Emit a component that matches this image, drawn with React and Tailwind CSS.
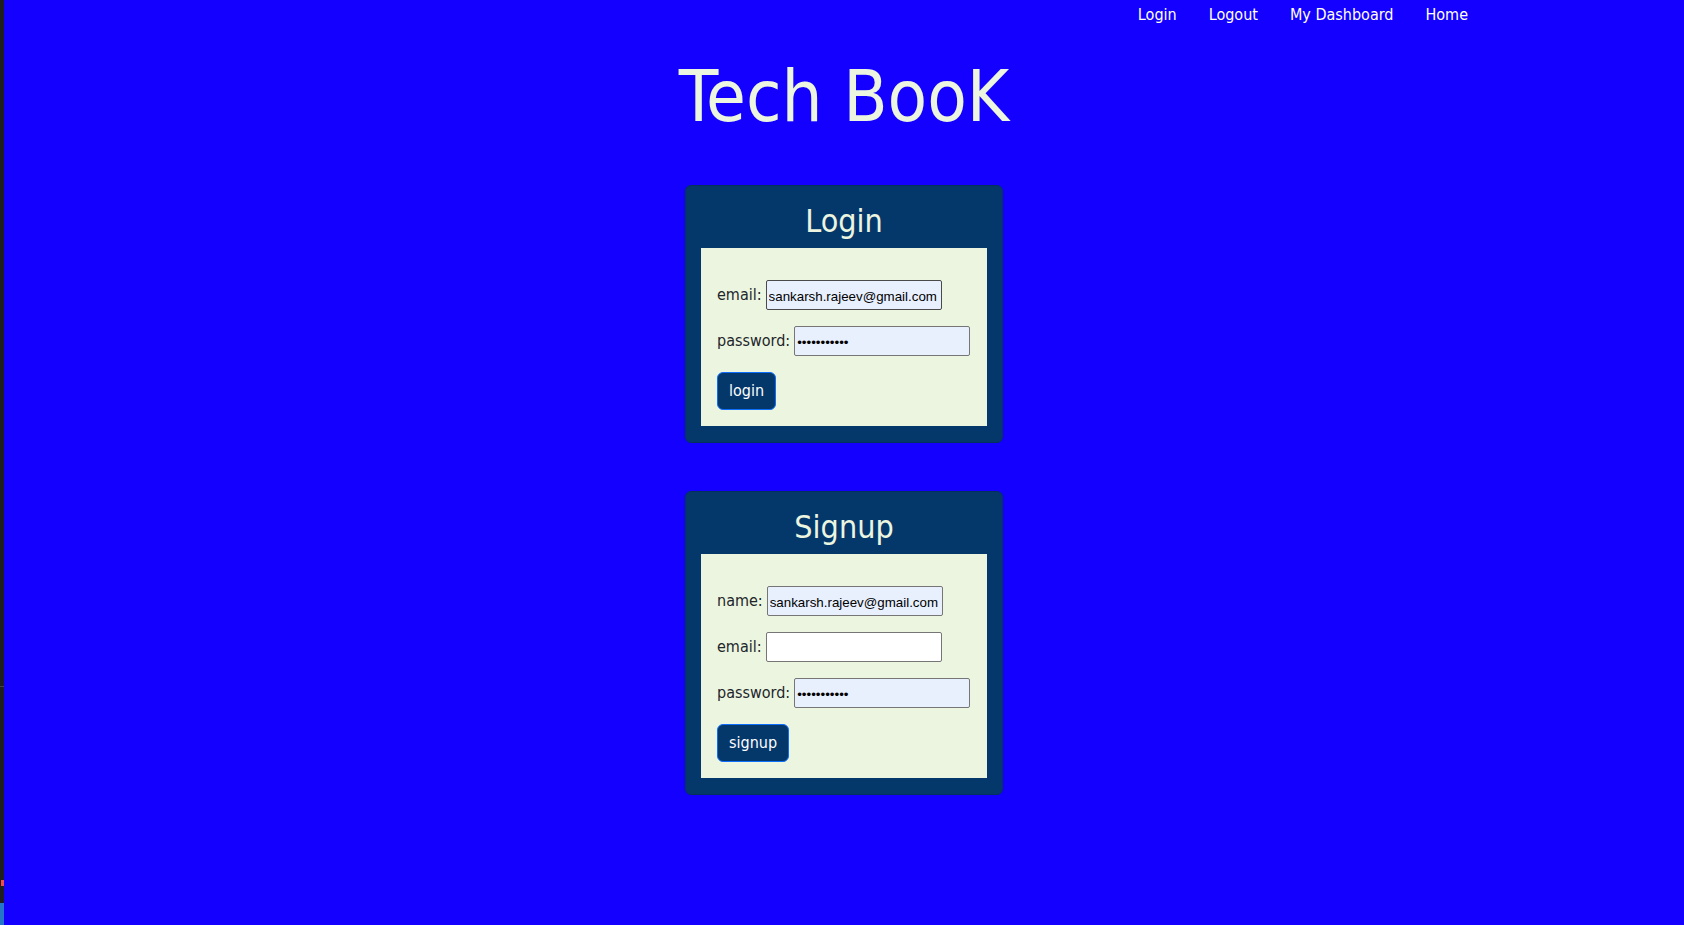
const links = ["Login", "Logout", "My Dashboard", "Home"];

function Field({ id, label, type, value = "", dark = false }) {
  return (
    <div className="flex items-center gap-1">
      <label htmlFor={id}>{label}:</label>
      <input
        id={id}
        type={type}
        defaultValue={value}
        className={`h-[30px] w-44 rounded-xs border px-0.5 pt-0.5 font-['Liberation_Sans',Arial,sans-serif] [font-size:smaller] text-black ${
          dark ? "border-[#4a4a4a]" : "border-[#767676]"
        } ${value ? "bg-[#e8f0fe]" : "bg-white"}`}
      />
    </div>
  );
}

function Card({ title, action, children }) {
  return (
    <section className="w-[318px] rounded-md border border-[#04305d] bg-[#04386b] px-[15px] py-4">
      <h2 className="mb-2 text-center text-[32px] leading-[38px] text-[#ecf5e0]">{title}</h2>
      <form
        className="flex flex-col items-start gap-4 bg-[#ecf5e0] px-4 pt-8 pb-4"
        onSubmit={(e) => e.preventDefault()}
      >
        {children}
        <button
          type="submit"
          className="h-[38px] rounded-md border border-[#0d6efd] bg-[#04386b] px-[11px] text-white"
        >
          {action}
        </button>
      </form>
    </section>
  );
}

export default function App() {
  return (
    <div className="flex min-h-screen bg-[#1400ff] font-['DejaVu_Sans_Condensed','DejaVu_Sans',sans-serif] text-[16px] leading-6 text-[#212529]">
      <div className="flex w-1 shrink-0 flex-col items-end bg-[#1e1e1e]">
        <div className="mt-auto h-px w-full bg-[#444444]" />
        <div className="mt-[193px] h-1.5 w-[3px] bg-[#f14c4c]" />
        <div className="mt-[17px] h-[22px] w-full bg-[#2376c8]" />
      </div>
      <div className="flex-1">
        <nav className="mx-auto flex max-w-[1320px] justify-end gap-8 pt-[3px] pr-9">
          {links.map((name) => (
            <a key={name} href="#" className="text-white">
              {name}
            </a>
          ))}
        </nav>
        <h1 className="mt-[26px] text-center text-[72px] leading-[86px] text-[#ecf5e0]">Tech BooK</h1>
        <main className="mt-[46px] flex flex-col items-center gap-12">
          <Card title="Login" action="login">
            <Field id="login-email" label="email" type="text" value="sankarsh.rajeev@gmail.com" dark />
            <Field id="login-password" label="password" type="password" value="techbook123" />
          </Card>
          <Card title="Signup" action="signup">
            <Field id="signup-name" label="name" type="text" value="sankarsh.rajeev@gmail.com" />
            <Field id="signup-email" label="email" type="text" />
            <Field id="signup-password" label="password" type="password" value="techbook123" />
          </Card>
        </main>
      </div>
    </div>
  );
}
